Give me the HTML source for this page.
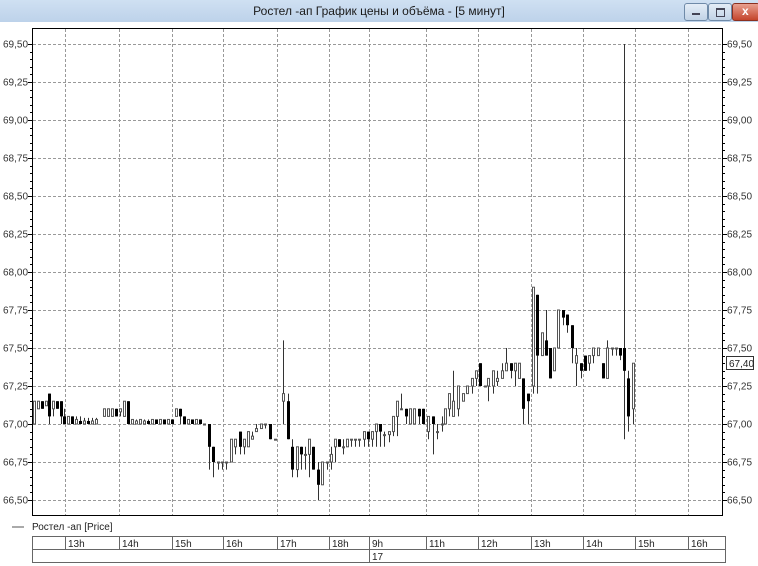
<!DOCTYPE html>
<html><head><meta charset="utf-8"><style>
body{margin:0;width:758px;height:566px;overflow:hidden;background:#fff;font-family:"Liberation Sans",sans-serif}
.tb{position:absolute;left:0;top:0;width:758px;height:22px;background:linear-gradient(#cfe0f2,#bdd2ea);}
.tt{position:absolute;left:0;width:758px;top:4px;text-align:center;font-size:12px;color:#1a1a1a}
.btn{position:absolute;top:3px;height:16px;border:1px solid #6f8aa8;border-radius:3px;background:linear-gradient(#e4edf7,#c2d3e6)}
</style></head><body>
<div class="tb"><div class="tt">Ростел -ап График цены и объёма - [5 минут]</div>
<div class="btn" style="left:684px;width:22px"><div style="position:absolute;left:7px;top:9px;width:8px;height:2px;background:#445"></div></div>
<div class="btn" style="left:708px;width:22px"><div style="position:absolute;left:7px;top:4px;width:7px;height:6px;border:1px solid #445;border-top-width:2px"></div></div>
<div class="btn" style="left:732px;width:26px;background:linear-gradient(#e8a090,#c4452c);border-color:#8a3020"><div style="position:absolute;left:9px;top:0px;color:#fff;font-weight:bold;font-size:12px">x</div></div>
</div>
<svg id="s" width="758" height="566" style="position:absolute;left:0;top:0" font-family="Liberation Sans, sans-serif" font-size="10"></svg>
<script>
var s=document.getElementById('s'),h='';
function Y(p){return 44+(69.5-p)*152;}
h+='<rect x="32.5" y="28.5" width="690" height="487" fill="none" stroke="#000"/>';
for(var i=0;i<=12;i++){var p=66.5+i*0.25,y=Math.round(Y(p))+0.5;
h+='<line x1="33" x2="722" y1="'+y+'" y2="'+y+'" stroke="#999" stroke-dasharray="3,2"/>';
var t=p.toFixed(2).replace('.',',');
h+='<text x="3" y="'+(y+3)+'" fill="#333">'+t+'</text><text x="727" y="'+(y+3)+'" fill="#333">'+t+'</text>';
h+='<line x1="28" x2="33" y1="'+y+'" y2="'+y+'" stroke="#000"/><line x1="722" x2="727" y1="'+y+'" y2="'+y+'" stroke="#000"/>';
for(var k=1;k<5&&i<12;k++){var yy=Math.round(Y(p+k*0.05))+0.5;h+='<line x1="30" x2="33" y1="'+yy+'" y2="'+yy+'" stroke="#000"/><line x1="722" x2="725" y1="'+yy+'" y2="'+yy+'" stroke="#000"/>';}}
var gx=[65,119,172,223,277,329,369,426,478,531,583,635,688];
gx.forEach(function(x){h+='<line x1="'+(x+.5)+'" x2="'+(x+.5)+'" y1="29" y2="515" stroke="#999" stroke-dasharray="3,2"/>';});
var c=[[34,67.0,67.15,67.15,67.0],[38,67.1,67.15,67.15,67.1],[42,67.15,67.1,67.15,67.1],[46,67.12,67.15,67.15,67.12],[49,67.2,67.05,67.2,67.0],[53,67.1,67.15,67.15,67.05],[57,67.15,67.1,67.15,67.1],[61,67.15,67.05,67.15,67.0],[64,67.05,67.0,67.1,67.0],[68,67.0,67.05,67.05,67.0],[72,67.05,67.0,67.05,67.0],[76,67.0,67.03,67.05,67.0],[80,67.02,67.0,67.05,67.0],[84,67.0,67.02,67.04,67.0],[88,67.02,67.0,67.04,67.0],[92,67.0,67.02,67.04,67.0],[96,67.0,67.03,67.04,67.0],[104,67.05,67.1,67.1,67.05],[108,67.05,67.1,67.1,67.05],[112,67.05,67.1,67.1,67.05],[116,67.1,67.05,67.1,67.05],[120,67.08,67.1,67.1,67.05],[124,67.05,67.15,67.15,67.05],[128,67.15,67.0,67.15,67.0],[132,67.0,67.03,67.03,67.0],[136,67.0,67.02,67.03,67.0],[140,67.0,67.03,67.03,67.0],[144,67.0,67.02,67.03,67.0],[148,67.02,67.0,67.03,67.0],[152,67.0,67.03,67.03,67.0],[156,67.03,67.0,67.03,67.0],[160,67.0,67.03,67.03,67.0],[164,67.03,67.0,67.03,67.0],[168,67.0,67.03,67.03,67.0],[172,67.03,67.0,67.03,67.0],[176,67.05,67.1,67.1,67.05],[180,67.1,67.05,67.1,67.0],[184,67.05,67.0,67.05,67.0],[188,67.0,67.03,67.03,67.0],[192,67.03,67.0,67.03,67.0],[196,67.0,67.03,67.03,67.0],[200,67.03,67.0,67.03,67.0],[204,67.0,67.0,67.0,67.0],[209,67.0,66.85,67.0,66.7],[213,66.85,66.75,66.85,66.65],[218,66.75,66.75,66.75,66.7],[222,66.75,66.75,66.75,66.7],[226,66.75,66.75,66.75,66.7],[231,66.75,66.9,66.9,66.75],[235,66.85,66.9,66.9,66.8],[240,66.95,66.85,66.95,66.8],[244,66.85,66.9,66.9,66.8],[248,66.85,66.95,66.95,66.85],[252,66.9,66.92,66.95,66.9],[256,66.95,66.97,67.0,66.95],[261,66.97,67.0,67.0,66.97],[265,67.0,67.0,67.0,66.97],[270,67.0,66.9,67.0,66.9],[275,66.9,66.9,66.9,66.9],[283,67.15,67.2,67.55,67.0],[288,67.15,66.9,67.2,66.9],[292,66.85,66.7,66.9,66.65],[297,66.7,66.85,66.85,66.65],[301,66.85,66.8,66.85,66.7],[305,66.8,66.8,66.85,66.7],[309,66.8,66.9,66.9,66.65],[313,66.85,66.7,66.85,66.7],[318,66.7,66.6,66.75,66.5],[322,66.6,66.75,66.75,66.6],[327,66.75,66.75,66.75,66.7],[331,66.75,66.8,66.85,66.7],[335,66.85,66.9,66.9,66.75],[339,66.9,66.85,66.9,66.85],[343,66.85,66.85,66.9,66.8],[347,66.85,66.9,66.9,66.85],[351,66.9,66.9,66.9,66.85],[355,66.9,66.9,66.9,66.85],[359,66.9,66.9,66.9,66.85],[364,66.9,66.95,66.95,66.85],[368,66.95,66.9,66.95,66.85],[372,66.9,66.95,66.95,66.85],[376,66.95,67.0,67.0,66.85],[380,67.0,66.95,67.0,66.85],[384,66.93,66.93,66.95,66.85],[389,66.93,66.95,66.95,66.88],[393,66.95,67.05,67.05,66.92],[397,67.05,67.15,67.15,66.92],[401,67.1,67.1,67.2,67.1],[406,67.1,67.05,67.1,67.0],[410,67.0,67.1,67.1,67.0],[414,67.0,67.1,67.1,67.0],[419,67.1,67.05,67.1,67.0],[423,67.1,67.0,67.1,67.0],[428,66.95,67.05,67.05,66.9],[433,67.05,67.0,67.05,66.8],[437,66.95,66.95,67.0,66.9],[442,67.0,67.0,67.05,66.95],[445,67.0,67.1,67.1,67.0],[449,67.1,67.2,67.2,67.05],[453,67.05,67.15,67.35,67.05],[458,67.1,67.25,67.25,67.05],[463,67.15,67.2,67.2,67.15],[467,67.2,67.25,67.25,67.2],[472,67.25,67.3,67.3,67.2],[476,67.3,67.35,67.35,67.25],[480,67.4,67.25,67.4,67.25],[485,67.25,67.25,67.25,67.25],[488,67.25,67.3,67.3,67.15],[493,67.25,67.35,67.35,67.2],[497,67.28,67.3,67.35,67.25],[502,67.3,67.35,67.4,67.3],[506,67.35,67.4,67.5,67.35],[511,67.4,67.35,67.4,67.3],[515,67.35,67.4,67.4,67.25],[519,67.3,67.4,67.4,67.3],[523,67.3,67.1,67.3,67.0],[528,67.2,67.15,67.2,67.0],[533,67.25,67.9,67.9,67.2],[537,67.85,67.45,67.85,67.2],[542,67.45,67.6,67.6,67.45],[546,67.55,67.45,67.75,67.45],[550,67.5,67.3,67.5,67.3],[554,67.35,67.5,67.5,67.35],[558,67.5,67.75,67.75,67.5],[563,67.75,67.7,67.75,67.65],[567,67.72,67.65,67.72,67.6],[572,67.65,67.5,67.65,67.4],[576,67.4,67.45,67.5,67.25],[581,67.4,67.35,67.4,67.3],[585,67.45,67.35,67.45,67.35],[589,67.4,67.45,67.45,67.35],[593,67.45,67.5,67.5,67.4],[598,67.45,67.5,67.5,67.45],[603,67.4,67.3,67.4,67.3],[607,67.3,67.5,67.55,67.3],[612,67.5,67.5,67.5,67.45],[616,67.5,67.5,67.5,67.45],[620,67.5,67.45,67.5,67.42],[624,67.5,67.35,69.5,66.9],[628,67.3,67.05,67.35,66.95],[633,67.1,67.4,67.4,67.0]];
c.forEach(function(d){var x=d[0]+.5,o=Y(d[1]),cl=Y(d[2]),hi=Y(d[3]),lo=Y(d[4]);
h+='<line x1="'+x+'" x2="'+x+'" y1="'+hi+'" y2="'+lo+'" stroke="#333"/>';
var t=Math.min(o,cl),b=Math.max(o,cl);if(b-t<1)b=t+1;
if(d[2]>=d[1])h+='<rect x="'+(d[0]-.5)+'" y="'+t+'" width="2" height="'+(b-t)+'" fill="#fff" stroke="#555"/>';
else h+='<rect x="'+(d[0]-1)+'" y="'+t+'" width="3" height="'+(b-t)+'" fill="#000"/>';});
h+='<rect x="726.5" y="356.5" width="27" height="13" fill="#fff" stroke="#333"/><text x="729" y="367" fill="#222">67,40</text>';
h+='<line x1="12" x2="24" y1="527" y2="527" stroke="#555"/><text x="32" y="530" fill="#222">Ростел -ап [Price]</text>';
h+='<rect x="32.5" y="536.5" width="693" height="26" fill="#fff" stroke="#666"/><line x1="32" x2="726" y1="549.5" y2="549.5" stroke="#666"/><line x1="369.5" x2="369.5" y1="536" y2="563" stroke="#666"/>';
var lb=['13h','14h','15h','16h','17h','18h','9h','11h','12h','13h','14h','15h','16h'];
gx.forEach(function(x,i){h+='<line x1="'+(x+.5)+'" x2="'+(x+.5)+'" y1="536" y2="549" stroke="#666"/><text x="'+(x+3)+'" y="547" fill="#222">'+lb[i]+'</text>';});
h+='<text x="372" y="560" fill="#222">17</text>';
s.innerHTML=h;
</script>
</body></html>
